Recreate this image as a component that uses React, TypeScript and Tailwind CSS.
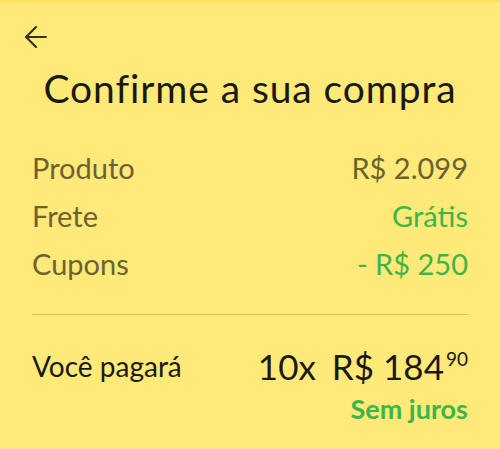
import React from 'react';
import { ArrowLeft } from 'lucide-react';

const rows = [
  { label: 'Produto', value: 'R$ 2.099', green: false },
  { label: 'Frete', value: 'Grátis', green: true },
  { label: 'Cupons', value: '- R$ 250', green: true },
];

export default function App() {
  return (
    <div
      className="w-[500px] h-[449px] bg-[#ffe978] border-t-2 border-[#fde35c] text-[#1b1a12] overflow-hidden"
      style={{ fontFamily: 'Lato, "Noto Sans", sans-serif' }}
    >
      <div className="h-[41px] pl-[19px] pt-[18px]">
        <ArrowLeft size={34} className="text-[#333027]" strokeWidth={1.5} />
      </div>

      <h1 className="mt-[22px] text-center text-[39px] leading-[46px] font-normal tracking-[0.9px]">
        Confirme a sua compra
      </h1>

      {/* Resumo */}
      <div className="mx-[32px] mt-[42px] flex flex-col gap-[18px] pb-[35px] border-b border-[#d3c067]">
        {rows.map((r) => (
          <div key={r.label} className="flex items-center justify-between text-[29px] leading-[30px]">
            <span className="text-[#6b6230]">{r.label}</span>
            <span className={r.green ? 'text-[#3cb54a]' : 'text-[#6b6230]'}>{r.value}</span>
          </div>
        ))}
      </div>

      <div className="mx-[32px] mt-[31px] flex justify-between">
        <span className="text-[28px] leading-[34px] mt-[3px]">Você pagará</span>
        <div className="flex flex-col items-end">
          <div className="flex items-start text-[35px] leading-[40px]">
            <span>10x</span>
            <span className="ml-[16px]">R$ 184</span>
            <span className="text-[19px] leading-[22px] ml-[2px] mt-[2px]">90</span>
          </div>
          <span className="text-[27px] leading-[30px] font-bold text-[#3cb54a] mt-[8px]">Sem juros</span>
        </div>
      </div>
    </div>
  );
}
